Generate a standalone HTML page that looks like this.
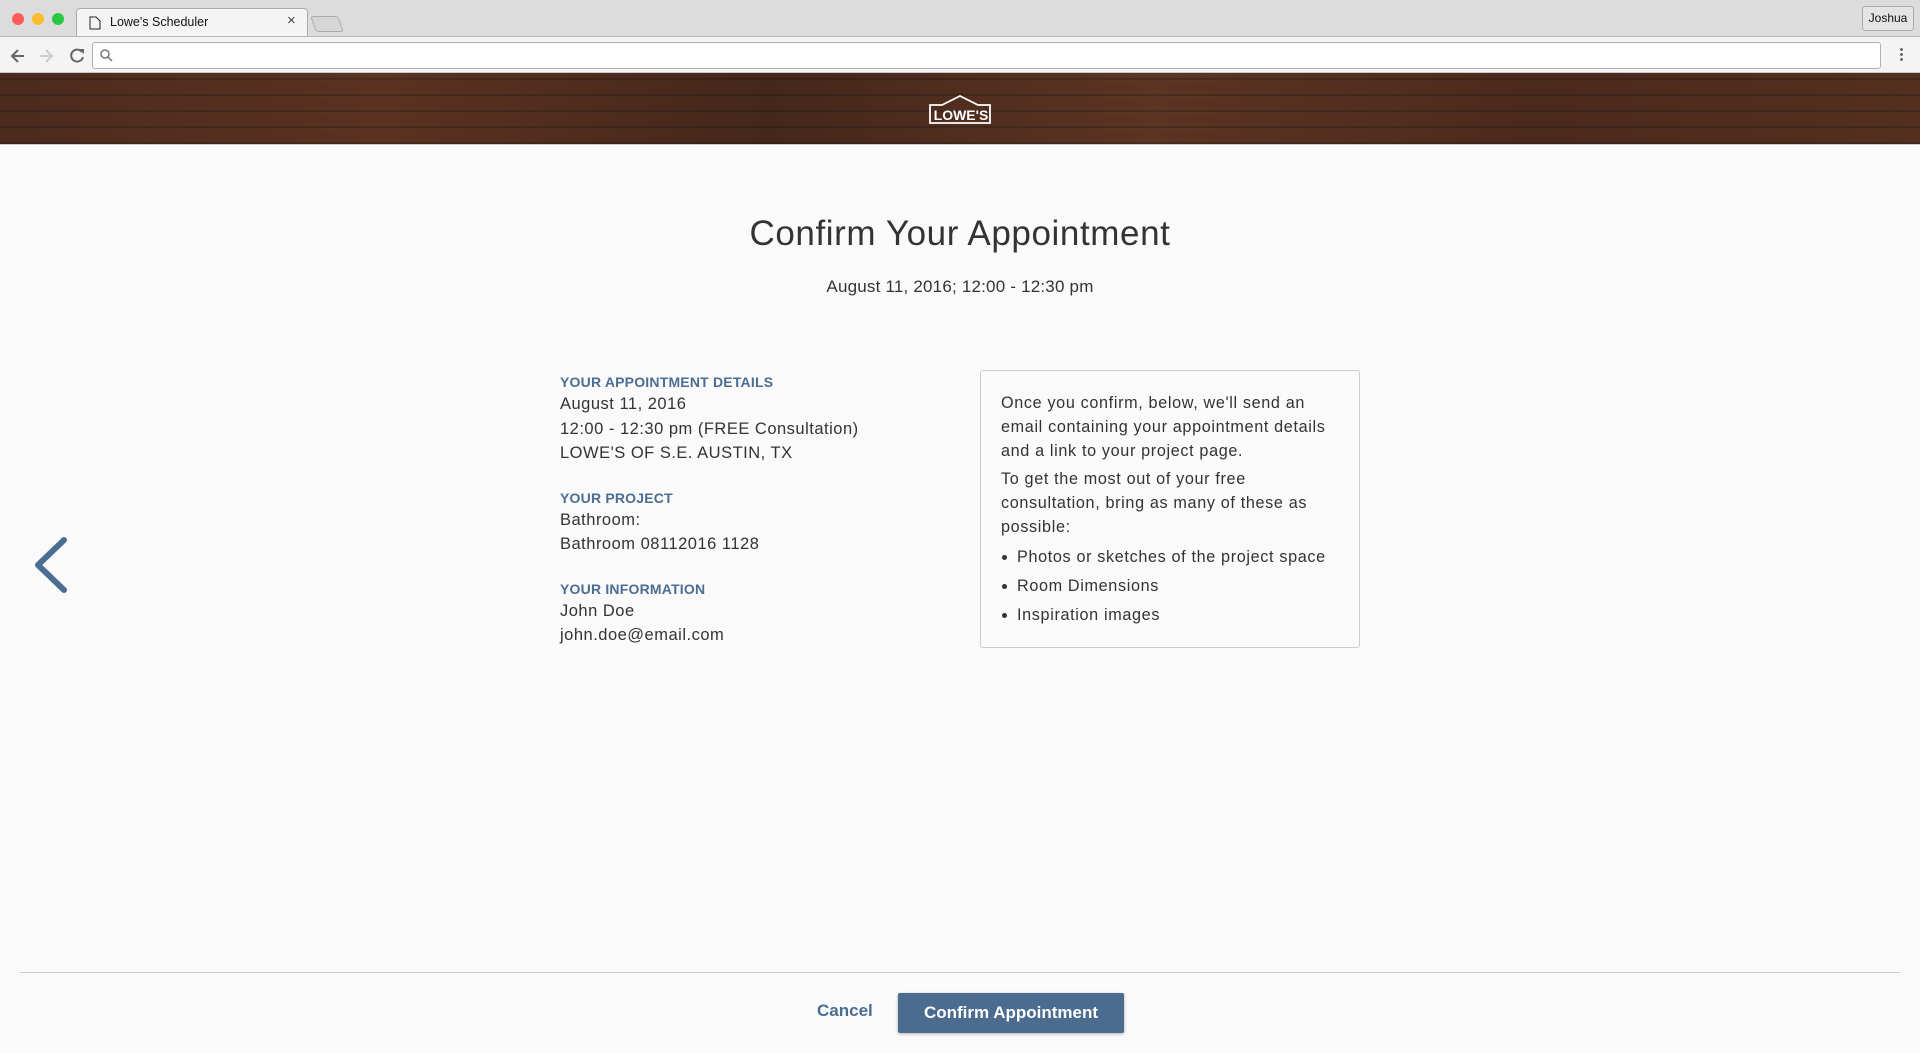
<!DOCTYPE html>
<html><head><meta charset="utf-8"><style>
*{margin:0;padding:0;box-sizing:border-box}
body{width:1920px;height:1053px;overflow:hidden;background:#fafafa;font-family:"Liberation Sans",sans-serif;position:relative}
.tabbar{position:absolute;left:0;top:0;width:1920px;height:37px;background:#dcdcdc}
.tab{position:absolute;left:76px;top:8px;width:232px;height:30px;background:#f4f4f4;border:1px solid #aaa;border-bottom:none;border-radius:4px 4px 0 0;}
.toolbar{position:absolute;left:0;top:36px;width:1920px;height:37px;background:#f4f4f4;border-top:1px solid #b5b5b5;border-bottom:1px solid #c8c8c8}
.url{position:absolute;left:92px;top:5px;width:1789px;height:27px;background:#fff;border:1px solid #b0b0b0;border-radius:3px}
.wood{position:absolute;left:0;top:73px;width:1920px;height:72px;background:
repeating-linear-gradient(180deg,rgba(0,0,0,0) 0 5px,rgba(0,0,0,.18) 5px 7px,rgba(255,255,255,0) 7px 13px,rgba(90,40,20,.25) 13px 16px),
linear-gradient(90deg,#4a2b1e,#5a3322 20%,#43271b 40%,#5b3524 60%,#4a2a1d 80%,#53301f);border-bottom:1px solid #ccc}
.h1{position:absolute;left:0;width:1920px;top:214px;text-align:center;font-size:35px;color:#333;letter-spacing:.6px}
.date{position:absolute;left:0;width:1920px;top:277px;text-align:center;font-size:17px;color:#333;letter-spacing:.2px}
.left{position:absolute;left:560px;top:372px;font-size:16.5px;color:#333;line-height:24.5px;letter-spacing:.5px}
.lbl{color:#4b6d91;font-weight:bold;font-size:14px;line-height:20px;letter-spacing:.2px}
.sec{margin-bottom:22px}
.box{position:absolute;left:980px;top:370px;width:380px;height:278px;border:1px solid #ccc;border-radius:3px;background:#fafafa;padding:20px 20px;font-size:16.2px;color:#333;line-height:24px;letter-spacing:.65px}
.box p{margin-bottom:4px}
.box ul{list-style:none}
.box li{line-height:29px;position:relative;padding-left:16px}
.box li:before{content:"";position:absolute;left:1px;top:12px;width:5px;height:5px;border-radius:50%;background:#333}
.hr{position:absolute;left:20px;top:972px;width:1880px;height:1px;background:#c9c9c9}
.cancel{position:absolute;left:817px;top:1001px;font-size:17px;font-weight:bold;color:#4b6d91}
.btn{position:absolute;left:898px;top:993px;width:226px;height:40px;background:#4b6c8f;border-radius:2px;box-shadow:0 1px 3px rgba(0,0,0,.3);color:#fff;font-weight:bold;font-size:17px;text-align:center;line-height:40px}
</style></head><body>
<div class="tabbar">
<div style="position:absolute;left:12px;top:13px;width:12px;height:12px;border-radius:50%;background:#fc5b57"></div>
<div style="position:absolute;left:32px;top:13px;width:12px;height:12px;border-radius:50%;background:#fdbc2e"></div>
<div style="position:absolute;left:52px;top:13px;width:12px;height:12px;border-radius:50%;background:#29c840"></div>
<div class="tab"></div>
<svg style="position:absolute;left:89px;top:16px" width="12" height="14"><path d="M1 1h6l4 4v8H1z" fill="none" stroke="#222"/></svg>
<div style="position:absolute;left:110px;top:15px;font-size:12.5px;color:#111">Lowe's Scheduler</div>
<div style="position:absolute;left:287px;top:12px;font-size:15px;color:#444">×</div>
<div style="position:absolute;left:313px;top:16px;width:28px;height:16px;border:1px solid #aaa;border-radius:3px;background:#d6d6d6;transform:skewX(20deg)"></div>
<div style="position:absolute;left:1862px;top:6px;width:52px;height:25px;border:1px solid #aaa;border-radius:3px;background:#e4e4e4;font-size:12px;line-height:23px;text-align:center;color:#111">Joshua</div>
</div>
<div class="toolbar">
<svg style="position:absolute;left:10px;top:10px" width="80" height="18"><path d="M14 9H3M8 3L2 9l6 6" fill="none" stroke="#666" stroke-width="2"/><path d="M30 9h11M36 3l6 6-6 6" fill="none" stroke="#ccc" stroke-width="2"/><path d="M72 5a6 6 0 1 0 1 5" fill="none" stroke="#666" stroke-width="2"/><path d="M69 2h5v5z" fill="#666"/></svg>
<div class="url"><svg style="position:absolute;left:7px;top:6px" width="14" height="14"><circle cx="5" cy="5" r="4" fill="none" stroke="#777" stroke-width="1.5"/><path d="M8 8l4 4" stroke="#777" stroke-width="1.5"/></svg></div>
<div style="position:absolute;left:1900px;top:10px;width:3px;height:14px;background:radial-gradient(circle,#666 1.3px,transparent 1.6px) 0 0/3px 5px"></div>
</div>
<div class="wood">
<svg style="position:absolute;left:928px;top:22px" width="66" height="30"><path d="M2 10h12l18-9 18 9h12v18H2z" fill="none" stroke="#fff" stroke-width="1.8"/><text x="33" y="25" text-anchor="middle" font-family="Liberation Sans" font-weight="bold" font-size="14" fill="#fff">LOWE'S</text></svg>
</div>
<div class="h1">Confirm Your Appointment</div>
<div class="date">August 11, 2016; 12:00 - 12:30 pm</div>
<div class="left">
<div class="sec"><div class="lbl">YOUR APPOINTMENT DETAILS</div>August 11, 2016<br>12:00 - 12:30 pm (FREE Consultation)<br>LOWE'S OF S.E. AUSTIN, TX</div>
<div class="sec"><div class="lbl">YOUR PROJECT</div>Bathroom:<br>Bathroom 08112016 1128</div>
<div class="sec"><div class="lbl">YOUR INFORMATION</div>John Doe<br>john.doe@email.com</div>
</div>
<div class="box">
<p>Once you confirm, below, we'll send an email containing your appointment details and a link to your project page.</p>
<p>To get the most out of your free consultation, bring as many of these as possible:</p>
<ul><li>Photos or sketches of the project space</li><li>Room Dimensions</li><li>Inspiration images</li></ul>
</div>
<svg style="position:absolute;left:28px;top:532px" width="45" height="70"><path d="M36 8L10 33l26 25" fill="none" stroke="#4b6d91" stroke-width="6" stroke-linecap="round" stroke-linejoin="round"/></svg>
<div class="hr"></div>
<div class="cancel">Cancel</div>
<div class="btn">Confirm Appointment</div>
</body></html>
